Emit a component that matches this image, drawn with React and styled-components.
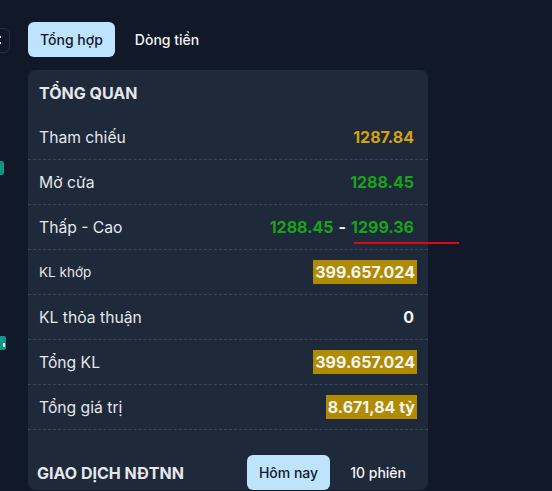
import React from 'react';
import styled, { createGlobalStyle } from 'styled-components';

const GlobalStyle = createGlobalStyle`
  html, body {
    margin: 0;
    padding: 0;
    background: #111827;
    font-family: Inter, "Noto Sans", sans-serif;
    overflow: hidden;
  }
`;

const Page = styled.div`
  display: flex;
  width: 552px;
  height: 491px;
  background: #111827;
  overflow: hidden;
`;

const Sidebar = styled.div`
  width: 12px;
  flex-shrink: 0;
  overflow: hidden;
  display: flex;
  flex-direction: column;
  padding-top: 28px;
`;

const SideTool = styled.div`
  margin-left: -20px;
  width: 30px;
  height: 25px;
  border: 1px solid #263040;
  border-radius: 6px;
  display: flex;
  align-items: center;
  justify-content: flex-end;
  padding-right: 8px;
  box-sizing: border-box;
`;

const SideBadge = styled.div`
  margin-left: -30px;
  margin-top: ${(p) => p.$top}px;
  width: ${(p) => 30 + p.$w}px;
  height: 14px;
  background: #0f9488;
  border-radius: 2px;
  display: flex;
  align-items: center;
  justify-content: flex-end;
  padding-right: 1px;
  box-sizing: border-box;
`;

const BadgeMark = styled.i`
  width: 2px;
  height: 4px;
  margin-top: 3px;
  background: #e6fffb;
`;

const Main = styled.div`
  margin-left: 16px;
  width: 400px;
  display: flex;
  flex-direction: column;
  padding-top: 22px;
`;

const TabBar = styled.div`
  display: flex;
  gap: 8px;
  align-items: center;
`;

const Tab = styled.button`
  height: 35px;
  padding: 0 12px;
  border: none;
  border-radius: 6px;
  font-family: inherit;
  font-size: 14px;
  font-weight: 500;
  cursor: pointer;
  background: ${(p) => (p.$active ? '#bee3fd' : 'transparent')};
  color: ${(p) => (p.$active ? '#111827' : '#f3f4f6')};
`;

const Panel = styled.div`
  margin-top: 13px;
  background: #1e2939;
  border-radius: 7px;
  display: flex;
  flex-direction: column;
`;

const PanelTitle = styled.div`
  height: 45px;
  display: flex;
  align-items: center;
  padding: 0 11px;
  box-sizing: border-box;
  font-size: 16px;
  font-weight: 700;
  color: #e5e7eb;
`;

const Row = styled.div`
  position: relative;
  height: 45px;
  display: flex;
  align-items: center;
  justify-content: space-between;
  padding: 0 14px 0 11px;
  border-bottom: 1px dashed #3a4557;
  box-sizing: border-box;
`;

const Label = styled.span`
  font-size: ${(p) => (p.$small ? 13.5 : 15.7)}px;
  color: #e5e7eb;
`;

const Value = styled.span`
  font-size: 16px;
  font-weight: 700;
  color: ${(p) => p.$color || '#f3f4f6'};
  ${(p) =>
    p.$hl &&
    `
    background: #b08b00;
    color: #f3f4f6;
    padding: 2px 2px;
    margin-right: -3px;
  `}
`;

const Dash = styled.span`
  color: #eef0f3;
  margin: 0 5px;
  font-weight: 700;
`;

const Marker = styled.div`
  position: absolute;
  left: 326px;
  top: 37px;
  width: 105px;
  height: 2px;
  background: #e30613;
`;

const Section = styled.div`
  margin-top: 25px;
  display: flex;
  align-items: center;
  padding-left: 9px;
`;

const SectionTitle = styled.div`
  flex: 1;
  font-size: 16px;
  font-weight: 700;
  color: #e5e7eb;
`;

const SubTabs = styled(TabBar)`
  gap: 8px;
  margin-right: 10px;
`;

const GREEN = '#18a31b';
const GOLD = '#d4a20e';

const DotsIcon = () => (
  <svg width="6" height="9" viewBox="0 0 6 9">
    <rect x="0" y="0" width="2" height="2" fill="#e5e7eb" />
    <rect x="0" y="6" width="2" height="2" fill="#e5e7eb" />
    <rect x="4" y="0" width="2" height="2" fill="#e5e7eb" />
    <rect x="4" y="6" width="2" height="2" fill="#e5e7eb" />
  </svg>
);

export default function App() {
  return (
    <Page>
      <GlobalStyle />
      <Sidebar>
        <SideTool>
          <DotsIcon />
        </SideTool>
        <SideBadge $top={108} $w={4} />
        <SideBadge $top={161} $w={6}>
          <BadgeMark />
        </SideBadge>
      </Sidebar>
      <Main>
        <TabBar>
          <Tab $active>Tổng hợp</Tab>
          <Tab>Dòng tiền</Tab>
        </TabBar>
        <Panel>
          <PanelTitle>TỔNG QUAN</PanelTitle>
          <Row>
            <Label>Tham chiếu</Label>
            <Value $color={GOLD}>1287.84</Value>
          </Row>
          <Row>
            <Label>Mở cửa</Label>
            <Value $color={GREEN}>1288.45</Value>
          </Row>
          <Row>
            <Label>Thấp - Cao</Label>
            <span>
              <Value $color={GREEN}>1288.45</Value>
              <Dash>-</Dash>
              <Value $color={GREEN}>1299.36</Value>
            </span>
            <Marker />
          </Row>
          <Row>
            <Label $small>KL khớp</Label>
            <Value $hl>399.657.024</Value>
          </Row>
          <Row>
            <Label>KL thỏa thuận</Label>
            <Value>0</Value>
          </Row>
          <Row>
            <Label>Tổng KL</Label>
            <Value $hl>399.657.024</Value>
          </Row>
          <Row>
            <Label>Tổng giá trị</Label>
            <Value $hl>8.671,84 tỷ</Value>
          </Row>
          <Section>
            <SectionTitle>GIAO DỊCH NĐTNN</SectionTitle>
            <SubTabs>
              <Tab $active>Hôm nay</Tab>
              <Tab>10 phiên</Tab>
            </SubTabs>
          </Section>
        </Panel>
      </Main>
    </Page>
  );
}
